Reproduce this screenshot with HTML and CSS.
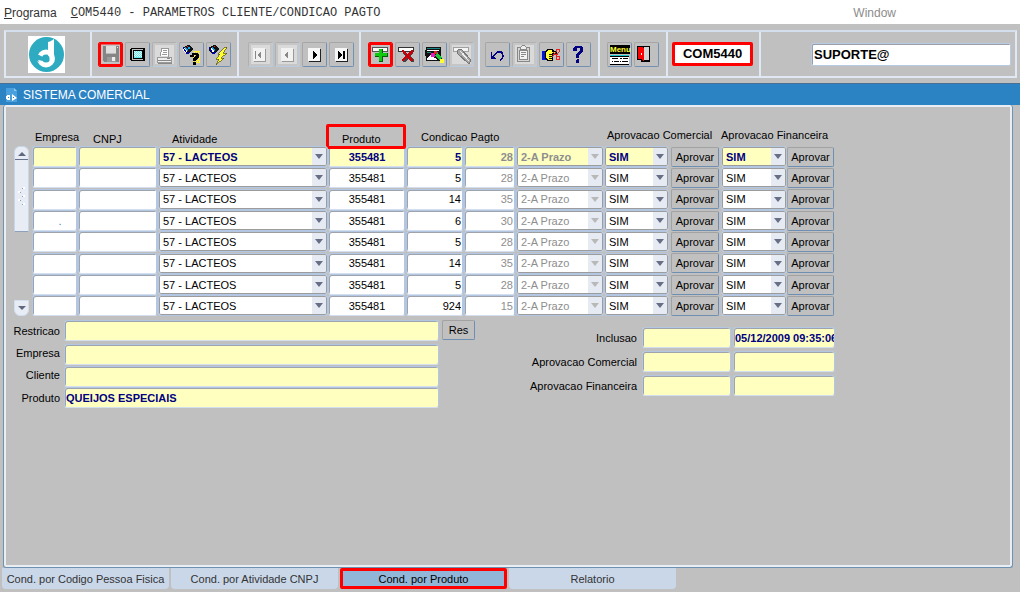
FILE: index.html
```
<!DOCTYPE html>
<html lang="pt-BR">
<head>
<meta charset="utf-8">
<title>COM5440 - Parametros Cliente/Condicao Pagto</title>
<link rel="stylesheet" href="styles.css">
</head>
<body>
<nav class="menubar">
  <a class="menu-item" href="#programa"><u>P</u>rograma</a>
  <span class="menu-title"><u>C</u>OM5440 - PARAMETROS CLIENTE/CONDICAO PAGTO</span>
  <a class="menu-window" href="#window">Window</a>
</nav>

<header class="toolbar">
  <div class="group group-logo">
    <svg class="logo" viewBox="0 0 37 37" aria-label="Logo"><rect width="37" height="37" fill="#fff"/><circle cx="18.500" cy="18.500" r="17.500" fill="#2eabc1"/><circle cx="18" cy="22.500" r="6.500" fill="none" stroke="#fff" stroke-width="5"/><path d="M20 6q2 0 6-3v17q0 6-3 8l-3-8z" fill="#fff"/><path d="M9 18l6 3 4 0-1 3-6 3-4-3z" fill="#2eabc1"/><path d="M10 24l5 1 1 4-4-1z" fill="#fff"/><circle cx="18" cy="22.500" r="3.500" fill="#2eabc1"/></svg>
  </div>
  <div class="group">
    <button class="tool marked" aria-label="Salvar"><svg viewBox="0 0 23 23"><path fill="#c4c4c4" d="M0 0h23v23H0z"/><path fill="#858585" d="M4 3h15l1 1v15H5l-1-1z"/><path fill="#dedede" d="M7 3h10v8H7z"/><path fill="#b9b9b9" d="M7 10h10v1H7z"/><path fill="#9a9a9a" d="M8 14h9v5H8z"/><path fill="#eee" d="M13 14h3v4h-3zM18 4h1v1h-1z"/></svg></button>
    <button class="tool" aria-label="Tela"><svg viewBox="0 0 23 23"><path d="M5 5h13l1 1v11l-1 1H5l-1-1V6z"/><path fill="#c0c0c0" d="M6 6h11v11H6z"/><path d="M7 7h10v9H7z"/><path fill="#62e8ee" d="M8 8h8v7H8z"/><path stroke="#e4ffff" stroke-dasharray="1 1" d="M8 8.500h8M9 9.500h7M8 10.500h8M9 11.500h7M8 12.500h8M9 13.500h7"/></svg></button>
    <button class="tool off" aria-label="Imprimir"><svg viewBox="0 0 23 23"><path fill="#fff" d="M8 5h8v8H7z"/><path fill="none" stroke="#999" d="M7.500 13.500l1-8h7v8M10 7.500h4M10 9.500h4M9 11.500h5"/><path fill="#eee" stroke="#999" d="M4.500 14.500h14v5h-14z"/><path fill="#888" d="M5 17h13v1H5zM14 15h3v1h-3zM5 20h14v1H5z"/></svg></button>
    <button class="tool" aria-label="Entrar consulta"><svg viewBox="0 0 23 23"><path fill="#fe3" d="M13 8h7v12h-7z"/><path fill="none" stroke="#c0c0c0" stroke-dasharray="1 1" d="M13 9.500h7M14 10.500h7M13 12.500h7M14 14.500h7M13 16.500h7M14 18.500h7"/><path fill="#111" d="M5 3l4-1 4 4-2 3-5 2-3-4z"/><path fill="#19d" d="M5 4l3 2-1 4-4-4z"/><path fill="#1ae" d="M8 4h2v2H8z"/><path fill="#fff" d="M4 5l3 3-2 2-2-3z"/><path fill="none" stroke="#00a" d="M3 4l4 7 3-2"/><path fill="#e22" d="M7 3h1v1H7z"/><path d="M10 12h2v-2h5l2 2v3l-3 2v1h-3v-3l3-2v-1h-2v2h-4zM13 19h3v3h-3z"/></svg></button>
    <button class="tool" aria-label="Executar consulta"><svg viewBox="0 0 23 23"><path fill="#111" d="M4 3l4-1 4 4-2 3-5 2-3-4z"/><path fill="#19d" d="M5 4l3 2-1 4-4-4z"/><path fill="#fff" d="M4 5l3 3-2 2-2-3z"/><path fill="none" stroke="#00a" d="M2 4l4 7 3-2"/><path fill="#e22" d="M7 3h1v1H7z"/><path fill="#ff3" stroke="#443b00" stroke-width=".600" d="M18 4h2l-4 6h4l-6 5h3l-8 7 3-6H9l4-5h-2z"/></svg></button>
  </div>
  <div class="group group-nav">
    <button class="tool off" aria-label="Primeiro"><svg viewBox="0 0 23 23"><path fill="#999" d="M5 6h12v13H5z"/><path fill="#f2f2f2" d="M4 5h12v13H4z"/><path fill="#888" d="M6 8h1v8H6zM8 12l4-4v8z"/></svg></button>
    <button class="tool off" aria-label="Anterior"><svg viewBox="0 0 23 23"><path fill="#999" d="M6 6h12v13H6z"/><path fill="#f2f2f2" d="M5 5h12v13H5z"/><path fill="#888" d="M8 12l4-4v8z"/></svg></button>
    <button class="tool" aria-label="Proximo"><svg viewBox="0 0 23 23"><path fill="#222" d="M6 6h12v13H6z"/><path fill="#f7f7f7" d="M5 5h12v13H5z"/><path d="M10 8l4 4-4 4z"/></svg></button>
    <button class="tool" aria-label="Ultimo"><svg viewBox="0 0 23 23"><path fill="#222" d="M6 6h12v13H6z"/><path fill="#f7f7f7" d="M5 5h12v13H5z"/><path d="M8 8l4 4-4 4zM13 8h2v8h-2z"/></svg></button>
  </div>
  <div class="group group-edit">
    <button class="tool marked" aria-label="Inserir"><svg viewBox="0 0 23 23"><path fill="#fff" stroke="#555" d="M3.500 4.500h15v4h-15z"/><path fill="#075c07" d="M10 6h4v4h5v4h-5v5h-4v-5H6v-4h4z"/><path fill="#10ca10" d="M10 6h3v4h5v3h-5v5h-3v-5H6v-3h4z"/></svg></button>
    <button class="tool" aria-label="Excluir"><svg viewBox="0 0 23 23"><path fill="#fff" stroke="#333" d="M2.500 4.500h15v4h-15z"/><path fill="#444" d="M8 8l4 4 3-4h2v2l-3 3 4 4v2h-3l-3-3-3 3H7v-2l3-3-3-4z"/><path fill="#c8000c" d="M7 7l4 4 4-4h2v2l-4 4 4 4v1h-3l-3-3-4 3H6v-2l4-3-4-4V7z"/></svg></button>
    <button class="tool" aria-label="Editar registro"><svg viewBox="0 0 23 23"><path fill="#111" d="M3 4h15v9h-1v5H3v-5H2V7h1z"/><path fill="#178383" d="M4 5h13v1H4zM4 9h11v1H4z"/><path fill="#fff" d="M4 7h12v1H4zM4 11h12v6H4z"/><path fill="#111" d="M4 11h4l-4 4zM8 9h5l8 9-2 2-10-7z"/><path fill="#17c733" d="M12 12l3-2 4 5-3 2z"/><path fill="#e81bc0" d="M8 10h4v4H8z"/><path fill="#e61d1d" d="M11 8h3v3h-3z"/><path fill="#ff3" d="M17 16h4v4h-4z"/></svg></button>
    <button class="tool off" aria-label="Limpar"><svg viewBox="0 0 23 23"><path fill="#f4f4f4" stroke="#a0a0a0" d="M3.500 4.500h15v4h-15z"/><path fill="#a7a7a7" stroke="#777" d="M8 7l3-1 10 11-2 4L7 10z"/><path stroke="#eee" fill="none" d="M10 8l9 10M12 12l2-2"/></svg></button>
  </div>
  <div class="group group-clip">
    <button class="tool" aria-label="Desfazer"><svg viewBox="0 0 23 23"><path fill="#000080" d="M5 9h1v4l3-3 3-2h3l2 2 1 3-1 3-3 2-1-1 3-2v-3l-1-2h-3l-2 1-3 3 3 1v1H5z"/></svg></button>
    <button class="tool off" aria-label="Colar"><svg viewBox="0 0 23 23"><path fill="#d6d6d6" stroke="#888" d="M4.500 4.500h12v14h-12z"/><path fill="#f3f3f3" stroke="#888" d="M6.500 7.500h8v9h-8z"/><path fill="#eee" stroke="#888" d="M7.500 4.500l2-2h2l2 2v2h-6zM8 9.500h5M8 11.500h5M8 13.500h3"/></svg></button>
    <button class="tool" aria-label="Lista"><svg viewBox="0 0 23 23"><path fill="#0018d8" d="M2 8h4v9H2z"/><path d="M5 8l3-2h5l1 2h3v3h-4v7H8l-3-2z"/><path fill="#ff3" d="M6 9l2-2h4v2h4v1h-4v7H9l-3-2z"/><path stroke="#111" fill="none" d="M9 11.500h3M9 13.500h3M9 15.500h3"/><path fill="none" stroke="#e62222" d="M13 9l4 4h2v3h-3v-3l3-4V6h-3v3l-4 5"/></svg></button>
    <button class="tool" aria-label="Ajuda"><svg viewBox="0 0 23 23"><path fill="#000080" d="M6 6l2-3h6l2 2v4l-4 3v3H9v-4l4-3V5h-3v3H6zM9 17l1-1h2v3l-1 1H9z"/></svg></button>
  </div>
  <div class="group group-exit">
    <button class="tool" aria-label="Menu principal"><svg viewBox="0 0 23 23"><path d="M2 2h20v9H2z"/><text class="menu-glyph" x="2" y="9">Menu</text><path fill="#1bc8cc" d="M2 12h19v1H2z"/><path d="M2 13h19v9H2z"/><path fill="#fff" d="M2 14h19v7H2z"/><path stroke="#000" d="M4 15.500h6M12 15.500h2M15 15.500h5M4 18.500h1M6 18.500h5M12 18.500h1M14 18.500h6"/></svg></button>
    <button class="tool" aria-label="Sair"><svg viewBox="0 0 23 23"><path d="M2 3h13v16H6v-2H2z"/><path fill="#d4d4d4" d="M9 4h5v13H9z"/><path fill="#f00" d="M3 4h4l2 2v12l-3-2H3z"/><path fill="#fff" d="M6 10h1v2H6z"/></svg></button>
  </div>
  <div class="group group-code"><output class="code">COM5440</output></div>
  <div class="group group-user"><input class="user" aria-label="Usuario" value="SUPORTE@"></div>
</header>

<div class="titlebar">
  <svg class="doc" viewBox="0 0 13 16" aria-hidden="true"><path fill="#49a0dc" d="M1 1h8l3 3v11H1z"/><path fill="#8dc8ed" d="M9 1v3h3z"/><path fill="#fff" d="M1 9h1V8h3v5H2v-1H1zM7 7l5 4-5 3z"/><path fill="#2b82c4" d="M3 10h1v1H3zM8 10h1v1H8z"/></svg>
  <h1>SISTEMA COMERCIAL</h1>
</div>

<main class="panel">
  <div class="records">
    <div class="scroll" aria-hidden="true">
      <div class="thumb"><i class="up"></i><svg class="grip" viewBox="0 0 9 20"><path fill="#fff" d="M6 0h2v2H6zM1 4h2v2H1zM6 8h2v2H6zM1 12h2v2H1zM6 16h2v2H6z"/><path fill="#8f9cb4" d="M5 1h1v1H5zM3 5h1v1H3zM5 9h1v1H5zM3 13h1v1H3zM5 17h1v1H5z"/></svg></div>
      <div class="down"><i></i></div>
    </div>
    <table class="grid">
      <colgroup><col class="w46"><col class="w80"><col class="w170"><col class="w78"><col class="w58"><col class="w52"><col class="w88"><col class="w65"><col class="w52"><col class="w66"><col class="w48"></colgroup>
      <thead><tr>
        <th class="in-2 mid">Empresa</th><th class="in-15">CNPJ</th><th class="in-13">Atividade</th>
        <th class="in-13 flagged">Produto</th><th class="in-15 mid" colspan="3">Condicao Pagto</th>
        <th class="in-2 high" colspan="2">Aprovacao Comercial</th><th class="high" colspan="2">Aprovacao Financeira</th>
      </tr></thead>
      <tbody id="rows"></tbody>
    </table>
  </div>

  <div class="details">
    <div class="left">
      <label for="restricao">Restricao</label><input id="restricao" class="field note">
      <button class="btn">Res</button>
      <label class="raised" for="empresa">Empresa</label><input id="empresa" class="field note">
      <label class="raised" for="cliente">Cliente</label><input id="cliente" class="field note">
      <label for="produto">Produto</label><input id="produto" class="field note" value="QUEIJOS ESPECIAIS">
    </div>
    <div class="right">
      <label for="inc">Inclusao</label><input id="inc" class="field note"><input class="field note" aria-label="Data de inclusao" value="05/12/2009 09:35:06">
      <label for="apc">Aprovacao Comercial</label><input id="apc" class="field note"><input class="field note" aria-label="Data aprovacao comercial">
      <label for="apf">Aprovacao Financeira</label><input id="apf" class="field note"><input class="field note" aria-label="Data aprovacao financeira">
    </div>
  </div>
</main>

<div class="tabs" role="tablist">
  <button class="tab" role="tab">Cond. por Codigo Pessoa Fisica</button>
  <button class="tab" role="tab">Cond. por Atividade CNPJ</button>
  <button class="tab current" role="tab" aria-selected="true">Cond. por Produto</button>
  <button class="tab" role="tab">Relatorio</button>
</div>
<script src="app.js"></script>
</body>
</html>
```
FILE: styles.css
```
* { box-sizing: border-box; }
body {
  margin: 0;
  min-height: 100vh;
  display: flex;
  flex-direction: column;
  background: #c0c0c0;
  color: #000;
  font: 11px/14px "Liberation Sans", Arial, sans-serif;
}
button, input, select { font: inherit; color: inherit; margin: 0; }

.menubar {
  display: flex;
  align-items: center;
  height: 24px;
  padding: 2px 4px 0;
  background: #fff;
  font-size: 12px;
}
.menubar a { color: #333; text-decoration: none; }
.menu-title {
  margin-left: 14px;
  color: #333;
  font-family: "Liberation Mono", "Courier New", monospace;
  white-space: nowrap;
}
.menubar .menu-window { margin-left: auto; padding-right: 120px; color: #8c8c8c; }

.toolbar {
  display: flex;
  height: 48px;
  margin: 6px 3px 5px 4px;
  border: 2px solid #dfe8f3;
  border-top-color: #d3dfed;
}
.group {
  display: flex;
  flex: none;
  align-items: center;
  gap: 2px;
  padding: 0 6px;
  border-right: 2px solid #dfe8f3;
}
.group-logo { width: 86px; justify-content: center; padding: 0 4px 0 0; }
.group-nav { padding: 0 5px 0 9px; }
.group-edit { padding: 0 4px 0 7px; }
.group-clip { padding: 0 7px 0 5px; }
.group-exit { padding: 0 7px; }
.group-code { padding: 0 6px 0 4px; }
.logo { width: 37px; height: 37px; }
.tool {
  width: 25px;
  height: 25px;
  padding: 0;
  border: 1px solid;
  border-color: #a6a6a6 #7090b4 #7090b4 #a6a6a6;
  border-radius: 2px;
  background: #c0c0c0;
}
.tool svg { display: block; width: 23px; height: 23px; shape-rendering: crispEdges; }
.tool.off {
  border-color: #b0b0b0 #b9cbe0 #b9cbe0 #b0b0b0;
  background: #dadada;
  box-shadow: inset 0 0 0 2px #c6c6c6;
}
.tool.marked { border-color: #f00; box-shadow: inset 0 0 0 2px #f00; }
.tool.marked svg { clip-path: inset(2px); }
.menu-glyph { font: bold 8px "Liberation Sans", Arial, sans-serif; fill: #ffff30; }
.code {
  width: 81px;
  height: 24px;
  border: 3px solid #f00;
  border-radius: 2px;
  background: #fff;
  font-size: 13px;
  font-weight: bold;
  line-height: 18px;
  text-align: center;
}
.group.group-user { flex: 1; justify-content: flex-end; padding: 0 4px; border: 0; }
.user {
  width: 200px;
  height: 23px;
  padding: 0 2px;
  border: 1px solid #b8cbe3;
  border-radius: 2px;
  box-shadow: inset 1px 1px #999ea8;
  background: #fff;
  font-size: 13px;
  font-weight: bold;
}

.titlebar {
  display: flex;
  align-items: center;
  gap: 5px;
  height: 22px;
  padding-left: 5px;
  border-top: 1px solid #4d6f94;
  background: #2c83c4;
  color: #fff;
}
.titlebar h1 { margin: 0; font-size: 12px; font-weight: normal; line-height: 16px; }
.doc { width: 13px; height: 16px; }

.panel {
  flex: 1;
  margin: 0 7px 0 3px;
  padding: 16px 0 0 10px;
  border: solid #7092b2;
  border-width: 0 1px 1px;
  border-radius: 3px;
  box-shadow: inset 0 0 0 2px #e9eef5;
}
.records { display: flex; align-items: flex-end; gap: 3px; }
.scroll {
  display: flex;
  flex-direction: column;
  justify-content: space-between;
  width: 15px;
  height: 170px;
}
.thumb {
  display: flex;
  flex-direction: column;
  align-items: center;
  justify-content: space-between;
  height: 86px;
  padding: 5px 0 24px;
  border: 1px solid #c7d7ea;
  border-bottom-color: #8ea0ba;
  border-radius: 6px 6px 0 0;
  background: linear-gradient(#66708a, #66708a) 0 12px / 100% 1px no-repeat, #e8edf5;
}
.up { border: 4px solid transparent; border-top: 0; border-bottom: 4px solid #60687e; }
.grip { width: 9px; height: 20px; }
.down {
  display: flex;
  justify-content: center;
  align-items: center;
  height: 16px;
  border: 1px solid #d2deed;
  border-radius: 0 0 6px 6px;
  background: #e8edf5;
}
.down i { border: 4px solid transparent; border-bottom: 0; border-top: 4px solid #60687e; }

.grid { border-spacing: 0; table-layout: fixed; width: 803px; }
.w46 { width: 46px; } .w48 { width: 48px; } .w52 { width: 52px; } .w58 { width: 58px; }
.w65 { width: 65px; } .w66 { width: 66px; } .w78 { width: 78px; } .w80 { width: 80px; }
.w88 { width: 88px; } .w170 { width: 170px; }
th {
  height: 25px;
  padding: 0;
  font-weight: normal;
  text-align: left;
  vertical-align: bottom;
  white-space: nowrap;
}
.mid { padding-bottom: 2px; }
.high { padding-bottom: 4px; }
.in-2 { padding-left: 3px; }
.in-13 { padding-left: 14px; }
.in-15 { padding-left: 15px; }
.flagged { position: relative; }
.flagged::after {
  content: "";
  position: absolute;
  inset: 3px 0 -3px -2px;
  border: 3px solid #f00;
  border-radius: 2px;
}
td { height: 21px; padding: 0; }
tr:nth-child(3n) td { height: 22px; }

.field {
  display: block;
  width: 100%;
  height: 21px;
  padding: 0 1px 0 2px;
  border: 1px solid #b3c7e2;
  border-bottom-color: #d3dfee;
  border-radius: 3px;
  box-shadow: inset 1px 1px #9fa3ab;
  background: #fff;
}
.center { text-align: center; }
.num { text-align: right; }
.dot { padding-left: 12px; color: #2c83c4; text-align: center; }
.muted { color: #8e8e8e; }
.grid .field { border-right-width: 2px; }
.pick { display: block; position: relative; }
.pick select {
  appearance: none;
  display: block;
  width: 100%;
  height: 21px;
  padding: 0 18px 0 4px;
  border: 1px solid #b3c7e2;
  border-radius: 3px;
  box-shadow: inset 0 0 0 1px #9c9c9c;
  background: linear-gradient(#e6ebf3, #e6ebf3) right 1px top 1px / 14px 17px no-repeat #fff;
  opacity: 1;
}
.pick::after {
  content: "";
  position: absolute;
  right: 5px;
  top: 8px;
  border: 4px solid transparent;
  border-top: 5px solid #686e86;
  border-bottom: 0;
  pointer-events: none;
}
.pick.muted::after { border-top-color: #b8b8b8; }
.active { color: #000080; font-weight: bold; }
.active .field { background: #ffffc0; }
.active .pick select { background-color: #ffffc0; }
.btn {
  display: block;
  height: 20px;
  padding: 0;
  border: 1px solid;
  border-color: #a2a2a2 #6f8fb2 #6f8fb2 #a2a2a2;
  border-radius: 2px;
  background: #c0c0c0;
  color: #000;
  font-weight: normal;
}
td .btn { width: 47px; }
.approve-a { padding-left: 2px; }
td.approve-a .btn { width: 48px; }

.details { display: flex; align-items: flex-start; gap: 55px; padding-top: 4px; }
.left {
  display: grid;
  grid-template-columns: 47px 375px 33px;
  grid-template-rows: 24px 22px 21px 21px;
  column-gap: 3px;
}
.left label, .right label { text-align: right; white-space: nowrap; }
.left label { grid-column: 1; padding: 4px 1px 0 0; justify-self: end; }
.left .raised { padding-top: 2px; }
.left .note { grid-column: 2; }
.left .btn { grid-column: 3; grid-row: 1; }
.note { color: #000080; background: #ffffc0; font-weight: bold; padding: 0 0 0 1px; }
.right {
  display: grid;
  grid-template-columns: 110px 89px 102px;
  grid-auto-rows: 24px;
  column-gap: 2px;
  padding-top: 7px;
}
.right label { padding: 4px 3px 0 0; }

.tabs { display: flex; gap: 2px; height: 24px; padding: 0 2px; }
.tab {
  width: 167px;
  height: 21px;
  padding: 0;
  border: 0;
  border-radius: 0 0 4px 4px;
  background: #c9d7e9;
  color: #333;
}
.tab.current { border: 3px solid #f00; border-radius: 2px; background: #92b6d8; color: #000; }
```
FILE: app.js
```
const records = [
  [5, 28], [5, 28], [14, 35], [6, 30], [5, 28], [14, 35], [5, 28], [924, 15]
];

const input = (label, cls, value = "") =>
  `<td><input class="field ${cls}" aria-label="${label}" value="${value}"></td>`;
const pick = (label, value, cls = "") =>
  `<td><span class="pick ${cls}"><select aria-label="${label}"${cls ? " disabled" : ""} class="${cls}"><option>${value}</option></select></span></td>`;

document.getElementById("rows").innerHTML = records.map(([code, days], i) => `
  <tr class="${i === 0 ? "active" : ""}">
    ${i === 3 ? input("Empresa", "dot", ".") : input("Empresa", "")}
    ${input("CNPJ", "")}
    ${pick("Atividade", "57 - LACTEOS")}
    ${input("Produto", "center", "355481")}
    ${input("Condicao", "num", code)}
    ${input("Dias", "num muted", days)}
    ${pick("Tipo", "2-A Prazo", "muted")}
    ${pick("Aprovacao Comercial", "SIM")}
    <td class="approve-a"><button class="btn">Aprovar</button></td>
    ${pick("Aprovacao Financeira", "SIM")}
    <td><button class="btn">Aprovar</button></td>
  </tr>`).join("");
```
